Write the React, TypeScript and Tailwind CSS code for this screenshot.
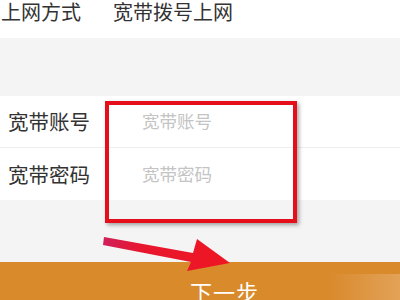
import React from "react";

export default function App() {
  return (
    <div
      className="relative w-[400px] h-[300px] overflow-hidden bg-[#f4f4f4]"
      style={{ fontFamily: '"Noto Sans CJK SC", "Noto Sans", sans-serif' }}
    >
      <div className="h-[38px] bg-white flex items-start text-[20px] leading-[20px] text-[#333] pt-[2px]">
        <span className="w-[113px] pl-[1px]">上网方式</span>
        <span>宽带拨号上网</span>
      </div>
      <div className="h-[58px]" />
      <div className="bg-white">
        <div className="h-[52px] flex items-center border-b border-[#eeeeee]">
          <span className="w-[142px] pl-[8px] text-[20.5px] text-[#333]">宽带账号</span>
          <span className="text-[17.5px] text-[#c4c4c4]">宽带账号</span>
        </div>
        <div className="h-[52px] flex items-center">
          <span className="w-[142px] pl-[8px] text-[20.5px] text-[#333]">宽带密码</span>
          <span className="text-[17.5px] text-[#c4c4c4]">宽带密码</span>
        </div>
      </div>
      <div className="h-[62px]" />
      <div className="h-[58px] bg-[#d98a2b] flex items-start pl-[190px] pt-[14px] relative">
        <span className="text-[22px] leading-[30px] text-white tracking-[1px]">下一步</span>
        <div className="absolute right-0 top-[12px] w-[70px] h-[46px] bg-gradient-to-r from-[#d98a2b] to-[#e6ac6a] opacity-70" />
      </div>

      <div className="absolute left-[105px] top-[101px] w-[192px] h-[122px] border-[4px] border-[#e50f1c] shadow-[2px_2px_4px_rgba(0,0,0,0.35)]" />

      <svg className="absolute left-0 top-0" width="400" height="300" viewBox="0 0 400 300">
        <defs>
          <linearGradient id="ag" x1="0" y1="0" x2="1" y2="0">
            <stop offset="0" stopColor="#d0205a" />
            <stop offset="0.3" stopColor="#e8162e" />
            <stop offset="1" stopColor="#ee1622" />
          </linearGradient>
        </defs>
        <polygon
          points="104,237 193,253 197,239 230,263 187,271 191,262 103,245"
          fill="url(#ag)"
        />
      </svg>
    </div>
  );
}
